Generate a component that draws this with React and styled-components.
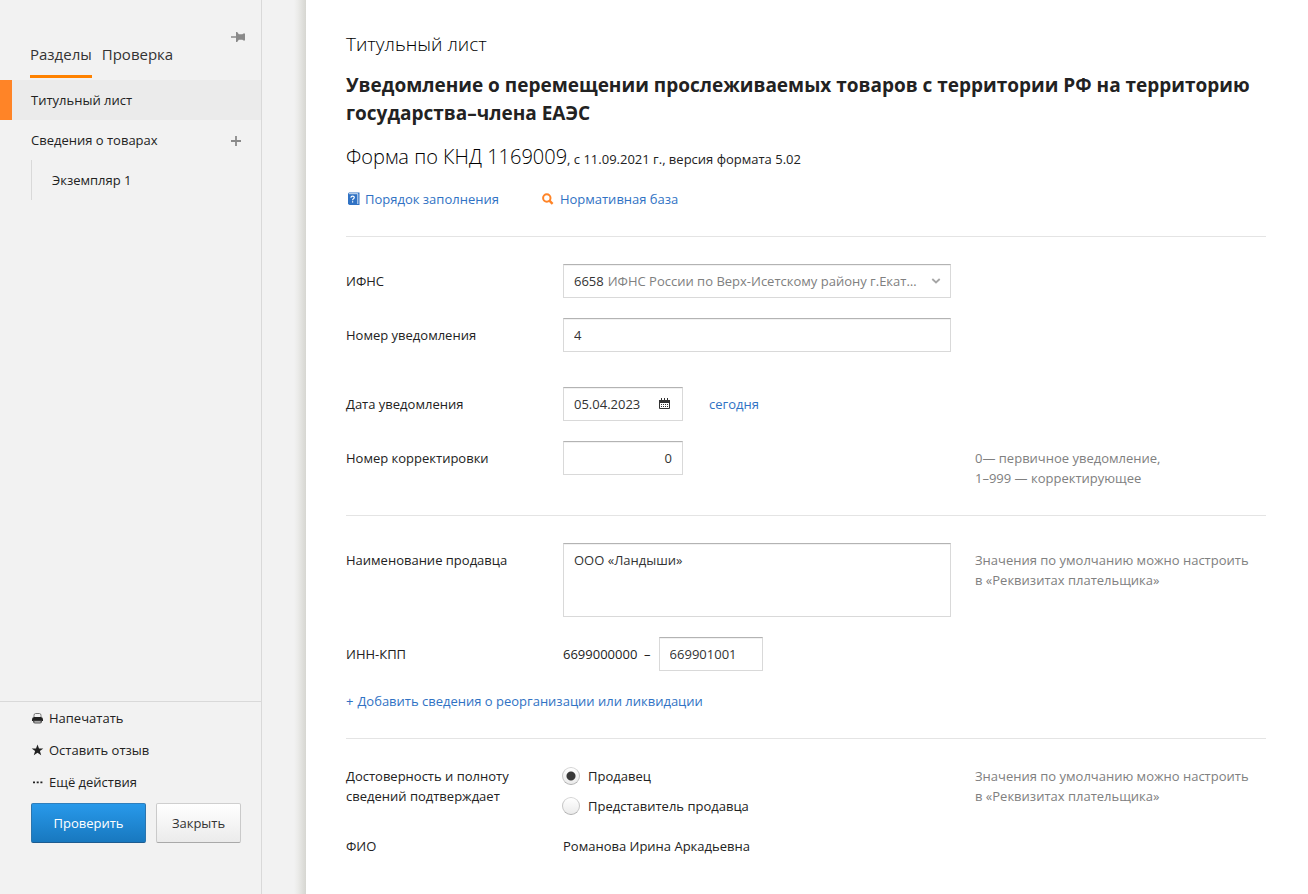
import {useState} from "react";
import styled, {createGlobalStyle} from "styled-components";

const GlobalStyle = createGlobalStyle`
    *, *::before, *::after {
        box-sizing: border-box;
    }
    body {
        margin: 0;
        background: #fff;
        color: #222;
        font: 13px/20px "Open Sans", "Noto Sans", sans-serif;
    }
    button, input, select, textarea {
        font: inherit;
        color: inherit;
    }
`;

const Page = styled.div`
    display: flex;
    min-height: 100vh;
`;

const Sidebar = styled.aside`
    display: flex;
    flex-direction: column;
    flex: 0 0 262px;
    background: #f2f2f2;
    border-right: 1px solid #d9d9d9;
`;

const SidebarHead = styled.div`
    display: flex;
    justify-content: space-between;
    align-items: flex-start;
    height: 80px;
    padding: 32px 16px 0 30px;
`;

const Tabs = styled.nav`
    display: flex;
    gap: 10px;
    padding-top: 9px;
`;

const Tab = styled.a`
    height: 37px;
    border-bottom: 3px solid ${({$active}) => ($active ? "#ff8200" : "transparent")};
    color: #333;
    font-size: 15px;
    line-height: 26px;
    text-decoration: none;
`;

const IconButton = styled.button`
    display: flex;
    padding: 0;
    border: 0;
    background: none;
    color: #8a8a8a;
    cursor: pointer;
`;

const SectionRow = styled.div`
    display: flex;
    align-items: center;
    justify-content: space-between;
    height: 40px;
    padding: 0 20px 0 ${({$active}) => ($active ? "19px" : "31px")};
    border-left: ${({$active}) => ($active ? "12px solid #ff8427" : "0")};
    background: ${({$active}) => ($active ? "#ebebeb" : "transparent")};
`;

const SectionLink = styled.a`
    color: #222;
    text-decoration: none;
`;

const SubSections = styled.div`
    display: flex;
    align-items: center;
    height: 40px;
    margin-left: 31px;
    padding-left: 20px;
    border-left: 1px solid #d9d9d9;
`;

const SidebarFooter = styled.div`
    margin-top: auto;
    padding: 0 20px 51px 31px;
    border-top: 1px solid #d9d9d9;
`;

const ActionLink = styled.a`
    display: flex;
    align-items: center;
    gap: 5px;
    height: 32px;
    color: #222;
    text-decoration: none;
`;

const Buttons = styled.div`
    display: flex;
    gap: 10px;
    padding-top: 5px;
`;

const Button = styled.button`
    flex: ${({$primary}) => ($primary ? "0 0 115px" : "0 0 85px")};
    height: 40px;
    padding: 0;
    border: 1px solid;
    border-color: ${({$primary}) => ($primary ? "#2f7fbd #2b75ae #1d5c90" : "#cfcfcf #cacaca #a9a9a9")};
    border-radius: 2px;
    background: ${({$primary}) => ($primary ? "linear-gradient(#2899ea, #1878bf)" : "linear-gradient(#fff, #ebebeb)")};
    color: ${({$primary}) => ($primary ? "#fff" : "#333")};
    cursor: pointer;
`;

const Gutter = styled.div`
    flex: 0 0 44px;
    background: linear-gradient(to right, #f2f2f2 32px, #ebebe9 36px, #d6d6d1 44px);
`;

const Main = styled.main`
    flex: 1;
    min-width: 0;
    padding: 30px 42px 10px 40px;
`;

const SheetName = styled.p`
    margin: 0;
    color: #000;
    font-size: 19px;
    font-weight: 300;
    line-height: 28px;
`;

const Title = styled.h1`
    margin: 13px 0 0;
    font-size: 19px;
    font-weight: 700;
    line-height: 28px;
`;

const FormCode = styled.p`
    margin: 16px 0 0;
    color: #000;
    font-size: 20px;
    font-weight: 300;
    line-height: 28px;
`;

const Small = styled.span`
    color: #222;
    font-size: 13px;
    font-weight: 400;
`;

const HelpLinks = styled.div`
    display: flex;
    gap: 42px;
    padding: 16px 0 27px;
`;

const TextLink = styled.a`
    display: inline-flex;
    align-items: center;
    gap: 4px;
    color: #3072c4;
    text-decoration: none;
`;

const Section = styled.section`
    display: grid;
    row-gap: 20px;
    padding: 27px 0;
    border-top: 1px solid #e4e4e4;
`;

const Row = styled.div`
    display: grid;
    grid-template-columns: 217px minmax(0, 388px) minmax(0, 1fr);
    align-items: start;
    margin-top: ${({$spaced}) => ($spaced ? "15px" : "0")};
`;

const Label = styled.label`
    padding-top: ${({$flat}) => ($flat ? "0" : "7px")};
`;

const Field = styled.div`
    display: flex;
    align-items: center;
`;

const Note = styled.p`
    margin: 0 0 0 24px;
    padding-top: ${({$flat}) => ($flat ? "0" : "7px")};
    color: #808080;
`;

const box = `
    border: 1px solid;
    border-color: #b3b3b3 #d9d9d9 #d9d9d9;
    border-radius: 0;
    background: #fff;
    box-shadow: inset 0 1px 0 #f2f2f2;
    color: #333;
`;

const Input = styled.input`
    ${box}
    width: ${({$width}) => $width || "100%"};
    height: 34px;
    padding: 0 10px;
    text-align: ${({$align}) => $align || "left"};
`;

const TextArea = styled.textarea`
    ${box}
    display: block;
    width: 100%;
    height: 74px;
    padding: 6px 10px;
    resize: none;
`;

const Combo = styled.div`
    ${box}
    display: flex;
    align-items: center;
    gap: 4px;
    width: 100%;
    height: 34px;
    padding: 0 9px 0 10px;
`;

const Select = styled.select`
    flex: 1;
    min-width: 0;
    padding: 0 4px 0 0;
    border: 0;
    appearance: none;
    background: none;
    color: #808080;
    text-overflow: ellipsis;
`;

const DateBox = styled.div`
    ${box}
    display: flex;
    align-items: center;
    justify-content: space-between;
    width: 120px;
    height: 34px;
    margin-right: 26px;
    padding: 0 12px 0 10px;
`;

const DateInput = styled.input`
    width: 76px;
    padding: 0;
    border: 0;
    background: none;
`;

const Inn = styled.span`
    margin-right: 8px;
`;

const AddLine = styled.div`
    display: flex;
`;

const Radios = styled.div`
    display: grid;
    gap: 10px;
`;

const RadioLabel = styled.label`
    display: flex;
    align-items: center;
    gap: 8px;
    height: 20px;
`;

const Radio = styled.input`
    appearance: none;
    width: 18px;
    height: 18px;
    margin: 0 0 0 -1px;
    border: 1px solid;
    border-color: #d4d4d4 #c6c6c6 #b0b0b0;
    border-radius: 50%;
    background: linear-gradient(#fff, #ebebeb);
    &:checked {
        background: radial-gradient(circle, #3a3a3a 4px, transparent 5px), linear-gradient(#fff, #ebebeb);
    }
`;

const PinIcon = () => (
    <svg width="14" height="10" viewBox="0 0 14 10" fill="currentColor">
        <path d="M0 4.300h5v1.400H0zM5 0h1.200l1.600 2.200h3.600L12.400 1.400H14v7.200h-1.600l-1-.8H7.800L6.200 10H5z" />
    </svg>
);

const PlusIcon = () => (
    <svg width="10" height="12" viewBox="0 0 10 12" fill="currentColor">
        <path d="M4.100 2h1.800v4.100H10v1.800H5.900V12H4.100V7.900H0V6.100h4.100z" />
    </svg>
);

const PrinterIcon = () => (
    <svg width="13" height="12" viewBox="0 0 13 12">
        <path d="M3 5V3.500Q3 1.500 4.500 1.500h4Q10 1.500 10 3.500V5" fill="none" stroke="#777" />
        <path d="M3 5h7Q12 5 12 7.500v1.500H1V7.500Q1 5 3 5z" fill="#222" />
        <path d="M2 8.500h9v1q0 2-2 2H4q-2 0-2-2z" fill="#555" />
        <path d="M3.500 9.900h6" stroke="#ddd" />
    </svg>
);

const StarIcon = () => (
    <svg width="13" height="12" viewBox="0 0 13 12" fill="#222">
        <path d="M6.500 .5l1.500 4h4.300L8.900 7l1.300 4.200-3.700-2.500-3.700 2.500L4.100 7 .7 4.500H5z" />
    </svg>
);

const DotsIcon = () => (
    <svg width="13" height="12" viewBox="0 0 13 12" fill="#222">
        <path d="M2 5.500h2v1.800H2zM5.700 5.500h2v1.800h-2zM9.400 5.500h2v1.800h-2z" />
    </svg>
);

const HelpIcon = () => (
    <svg width="15" height="14" viewBox="0 0 15 14">
        <path d="M3 .5H13.500v12.500H3.500L2 12V1.500z" fill="#3072c4" />
        <path d="M3 1.700h8.800V12" fill="none" stroke="#fff" strokeWidth=".8" />
        <path d="M4.900 5.700q.1-1.500 1.700-1.500 1.700 0 1.700 1.300 0 .8-1.100 1.500-.6.400-.6 1.200M6.600 9.300v1.300" fill="none" stroke="#fff" strokeWidth="1.200" />
    </svg>
);

const SearchIcon = () => (
    <svg width="15" height="14" viewBox="0 0 15 14" fill="none" stroke="#ff8427">
        <circle cx="5.800" cy="6" r="3.700" strokeWidth="2" />
        <path d="M8.400 8.600l3.200 3.200" strokeWidth="2.400" />
    </svg>
);

const ChevronIcon = () => (
    <svg width="10" height="6" viewBox="0 0 10 6" fill="none" stroke="#a6a6a6" strokeWidth="1.800">
        <path d="M1.300 1l3.700 3.500L8.700 1" />
    </svg>
);

const CalendarIcon = () => (
    <svg width="11" height="12" viewBox="0 0 11 12" fill="#333">
        <path d="M0 2h11v3H0zM2 0h1v2H2zM5 0h1v2H5zM8 0h1v2H8z" />
        <path d="M.5 4v6.500h10V4" fill="none" stroke="#333" />
        <path d="M2 6h1v1H2zM4 6h1v1H4zM6 6h1v1H6zM8 6h1v1H8zM2 8h1v1H2zM4 8h1v1H4zM6 8h1v1H6zM8 8h1v1H8z" />
    </svg>
);

const App = () => {
    const [signer, setSigner] = useState("seller");

    return (
        <>
            <GlobalStyle />
            <Page>
                <Sidebar>
                    <SidebarHead>
                        <Tabs>
                            <Tab href="#sections" $active>Разделы</Tab>
                            <Tab href="#check">Проверка</Tab>
                        </Tabs>
                        <IconButton aria-label="Закрепить">
                            <PinIcon />
                        </IconButton>
                    </SidebarHead>
                    <SectionRow $active>
                        <SectionLink href="#title">Титульный лист</SectionLink>
                    </SectionRow>
                    <SectionRow>
                        <SectionLink href="#goods">Сведения о товарах</SectionLink>
                        <IconButton aria-label="Добавить">
                            <PlusIcon />
                        </IconButton>
                    </SectionRow>
                    <SubSections>
                        <SectionLink href="#item-1">Экземпляр 1</SectionLink>
                    </SubSections>
                    <SidebarFooter>
                        <ActionLink href="#print"><PrinterIcon />Напечатать</ActionLink>
                        <ActionLink href="#feedback"><StarIcon />Оставить отзыв</ActionLink>
                        <ActionLink href="#more"><DotsIcon />Ещё действия</ActionLink>
                        <Buttons>
                            <Button $primary>Проверить</Button>
                            <Button>Закрыть</Button>
                        </Buttons>
                    </SidebarFooter>
                </Sidebar>
                <Gutter />
                <Main>
                    <SheetName>Титульный лист</SheetName>
                    <Title>Уведомление о перемещении прослеживаемых товаров с территории РФ на территорию государства–члена ЕАЭС</Title>
                    <FormCode>
                        Форма по КНД 1169009<Small>, с 11.09.2021 г., версия формата 5.02</Small>
                    </FormCode>
                    <HelpLinks>
                        <TextLink href="#order"><HelpIcon />Порядок заполнения</TextLink>
                        <TextLink href="#law"><SearchIcon />Нормативная база</TextLink>
                    </HelpLinks>

                    <Section>
                        <Row>
                            <Label htmlFor="ifns">ИФНС</Label>
                            <Field>
                                <Combo>
                                    <span>6658</span>
                                    <Select id="ifns">
                                        <option>ИФНС России по Верх-Исетскому району г.Екатеринбурга</option>
                                    </Select>
                                    <ChevronIcon />
                                </Combo>
                            </Field>
                        </Row>
                        <Row>
                            <Label htmlFor="number">Номер уведомления</Label>
                            <Field>
                                <Input id="number" defaultValue="4" />
                            </Field>
                        </Row>
                        <Row $spaced>
                            <Label htmlFor="date">Дата уведомления</Label>
                            <Field>
                                <DateBox>
                                    <DateInput id="date" defaultValue="05.04.2023" />
                                    <CalendarIcon />
                                </DateBox>
                                <TextLink href="#today">сегодня</TextLink>
                            </Field>
                        </Row>
                        <Row>
                            <Label htmlFor="correction">Номер корректировки</Label>
                            <Field>
                                <Input id="correction" $width="120px" $align="right" defaultValue="0" />
                            </Field>
                            <Note>
                                0— первичное уведомление,
                                <br />
                                1–999 — корректирующее
                            </Note>
                        </Row>
                    </Section>

                    <Section>
                        <Row>
                            <Label htmlFor="seller-name">Наименование продавца</Label>
                            <Field>
                                <TextArea id="seller-name" defaultValue="ООО «Ландыши»" />
                            </Field>
                            <Note>
                                Значения по умолчанию можно настроить
                                <br />
                                в «Реквизитах плательщика»
                            </Note>
                        </Row>
                        <Row>
                            <Label htmlFor="kpp">ИНН-КПП</Label>
                            <Field>
                                <Inn>6699000000&nbsp; –</Inn>
                                <Input id="kpp" $width="104px" defaultValue="669901001" />
                            </Field>
                        </Row>
                        <AddLine>
                            <TextLink href="#reorganization">
                                <span>+</span>
                                Добавить сведения о реорганизации или ликвидации
                            </TextLink>
                        </AddLine>
                    </Section>

                    <Section>
                        <Row>
                            <Label as="div" id="signer-label" $flat>
                                Достоверность и полноту
                                <br />
                                сведений подтверждает
                            </Label>
                            <Radios role="radiogroup" aria-labelledby="signer-label">
                                <RadioLabel>
                                    <Radio type="radio" name="signer" checked={signer === "seller"} onChange={() => setSigner("seller")} />
                                    Продавец
                                </RadioLabel>
                                <RadioLabel>
                                    <Radio type="radio" name="signer" checked={signer === "agent"} onChange={() => setSigner("agent")} />
                                    Представитель продавца
                                </RadioLabel>
                            </Radios>
                            <Note $flat>
                                Значения по умолчанию можно настроить
                                <br />
                                в «Реквизитах плательщика»
                            </Note>
                        </Row>
                        <Row>
                            <Label as="div" $flat>ФИО</Label>
                            <Field>Романова Ирина Аркадьевна</Field>
                        </Row>
                    </Section>
                </Main>
            </Page>
        </>
    );
};

export default App;
